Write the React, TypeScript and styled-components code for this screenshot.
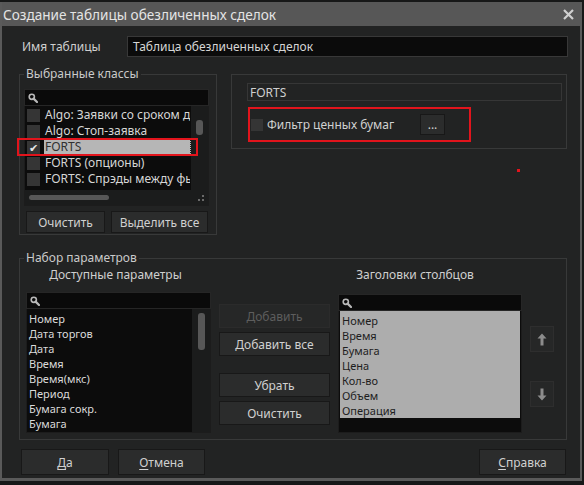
import React from "react";
import styled, { createGlobalStyle } from "styled-components";

const GlobalStyle = createGlobalStyle`
  body {
    margin: 0;
    background: #171818;
    font-family: "Noto Sans", "DejaVu Sans", sans-serif;
    font-size: 12px;
    color: #d0d0d0;
  }
`;

const Screen = styled.div`
  position: relative;
  width: 584px;
  height: 485px;
  padding-top: 2px;
  box-sizing: border-box;
  overflow: hidden;
`;

const Window = styled.div`
  width: 582px;
  height: 479px;
  box-sizing: border-box;
  border: 2px solid #5a5a5a;
  border-top: 0;
  border-bottom-width: 3px;
  background: #222323;
  display: flex;
  flex-direction: column;
`;

const TitleBar = styled.div`
  height: 24px;
  flex: none;
  background: #575757;
  display: flex;
  align-items: center;
  justify-content: space-between;
  padding: 0 6px 0 1px;
  color: #e4e4e4;
  font-size: 13.6px;
`;

const Body = styled.div`
  flex: 1;
  display: flex;
  flex-direction: column;
  padding: 10px 12px 0 17px;
`;

const NameRow = styled.div`
  display: flex;
  align-items: center;
  height: 21px;
`;

const NameLabel = styled.span`
  width: 105px;
  padding-left: 3px;
  color: #cfcfcf;
`;

const NameInput = styled.div`
  flex: 1;
  height: 21px;
  box-sizing: border-box;
  background: #0b0b0b;
  border: 1px solid #383838;
  padding-left: 5px;
  display: flex;
  align-items: center;
  color: #d6d6d6;
`;

const TopSection = styled.div`
  display: flex;
  align-items: flex-start;
  gap: 14px;
  margin-top: 10px;
`;

const GroupBox = styled.fieldset<{ $w: number; $mt?: number; $pt: number }>`
  margin: ${(p) => p.$mt ?? 0}px 0 0;
  width: ${(p) => p.$w}px;
  box-sizing: border-box;
  min-width: 0;
  padding: ${(p) => p.$pt}px 7px 1px 4px;
  border: 1px solid #383939;
`;

const GroupTitle = styled.legend`
  padding: 0 2px;
  margin: 0;
  line-height: 14px;
  color: #cacaca;
`;

const PlainGroup = styled.div`
  width: 336px;
  margin-top: 7px;
  box-sizing: border-box;
  border: 1px solid #383939;
  padding: 8px 4px 6px 15px;
`;

const SearchBox = styled.div`
  height: 17px;
  flex: none;
  box-sizing: border-box;
  background: #0a0a0a;
  border: 1px solid #262626;
  display: flex;
  align-items: center;
  padding-left: 3px;
`;

const ClassList = styled.div`
  height: 99px;
  display: grid;
  grid-template-columns: minmax(0, 1fr) 17px;
  grid-template-rows: minmax(0, 1fr) 15px;
  background: #0c0c0c;
  border: 1px solid #1c1c1c;
  border-top: 0;
`;

const Rows = styled.div`
  padding-top: 1px;
  min-width: 0;
`;

const ClassRow = styled.div`
  position: relative;
  height: 16px;
  display: flex;
  align-items: center;
  padding-left: 2px;
  white-space: nowrap;
`;

const Check = styled.span<{ $size?: number }>`
  width: ${(p) => p.$size ?? 13}px;
  height: ${(p) => p.$size ?? 13}px;
  flex: none;
  background: #353535;
  margin-right: 4px;
  display: flex;
  align-items: center;
  justify-content: center;
  color: #e8e8e8;
  font-size: 11px;
  line-height: 1;
`;

const RowText = styled.span<{ $selected?: boolean }>`
  flex: 1;
  min-width: 0;
  height: 16px;
  line-height: 16px;
  padding-left: 1px;
  overflow: hidden;
  color: ${(p) => (p.$selected ? "#303030" : "#d6d6d6")};
  background: ${(p) => (p.$selected ? "#b6b6b6" : "transparent")};
  border-right: 1px dotted ${(p) => (p.$selected ? "#1a1a1a" : "transparent")};
`;

const RedFrame = styled.span`
  position: absolute;
  z-index: 2;
  left: -8px;
  top: -1px;
  width: 181px;
  height: 18px;
  box-sizing: border-box;
  border: 2px solid #e2141c;
  pointer-events: none;
`;

const VTrack = styled.div<{ $thumbTop: number; $thumbH: number }>`
  background: #1b1c1c;
  display: flex;
  justify-content: center;
  align-items: flex-start;
  padding-top: ${(p) => p.$thumbTop}px;
  &::before {
    content: "";
    width: 7px;
    height: ${(p) => p.$thumbH}px;
    border-radius: 3px;
    background: #575757;
  }
`;

const HTrack = styled.div`
  background: #1b1c1c;
  display: flex;
  align-items: center;
  padding-left: 4px;
  &::before {
    content: "";
    width: 80px;
    height: 5px;
    border-radius: 3px;
    background: #575757;
  }
`;

const Grip = styled.div`
  background: #1b1c1c;
  display: flex;
  align-items: flex-end;
  justify-content: flex-end;
  padding: 0 3px 3px 0;
`;

const ButtonRow = styled.div<{ $mt: number; $ml?: number }>`
  display: flex;
  gap: 6px;
  margin: ${(p) => p.$mt}px 0 0 ${(p) => p.$ml ?? 0}px;
`;

const Button = styled.button<{ $w: number; $h: number }>`
  width: ${(p) => p.$w}px;
  height: ${(p) => p.$h}px;
  flex: none;
  padding: 0;
  background: #2b2c2c;
  border: 1px solid #181818;
  color: #d0d0d0;
  font: inherit;
  font-size: 12px;
  &:disabled {
    background: #262727;
    border-color: #2b2b2b;
    color: #5d5d5d;
  }
`;

const Field = styled.div`
  height: 18px;
  box-sizing: border-box;
  border: 1px solid #363636;
  padding-left: 2px;
  display: flex;
  align-items: center;
  color: #cfcfcf;
`;

const FilterRow = styled.div`
  width: 223px;
  height: 35px;
  box-sizing: border-box;
  margin: 6px 0 0 1px;
  border: 2px solid #e2141c;
  display: flex;
  align-items: center;
  padding-left: 1px;
`;

const FilterLabel = styled.span`
  flex: 1;
  color: #d0d0d0;
`;

const DotsButton = styled(Button)`
  margin-right: 24px;
  line-height: 10px;
`;

const ParamsGrid = styled.div`
  display: grid;
  grid-template-columns: 185px 111px 184px 24px;
  grid-template-rows: 16px 141px;
  column-gap: 8px;
  row-gap: 9px;
  margin-left: 2px;
  padding-bottom: 5px;
`;

const ColumnHeader = styled.div<{ $shift: number }>`
  text-align: center;
  line-height: 16px;
  padding-right: ${(p) => p.$shift}px;
  white-space: nowrap;
  color: #cfcfcf;
`;

const ListColumn = styled.div<{ $mt?: number }>`
  display: flex;
  flex-direction: column;
  margin-top: ${(p) => p.$mt ?? 0}px;
  min-height: 0;
`;

const ParamList = styled.div`
  flex: 1;
  display: grid;
  grid-template-columns: minmax(0, 1fr) 18px;
  background: #0c0c0c;
  border: 1px solid #1c1c1c;
  border-top: 0;
`;

const ParamRows = styled.div<{ $light?: boolean }>`
  padding-top: 2px;
  align-self: start;
  background: ${(p) => (p.$light ? "#adadad" : "transparent")};
`;

const ParamRow = styled.div<{ $light?: boolean }>`
  height: 15px;
  line-height: 15px;
  font-size: 11px;
  padding-left: 2px;
  white-space: nowrap;
  color: ${(p) => (p.$light ? "#1e1e1e" : "#dadada")};
`;

const HeadersList = styled.div`
  flex: 1;
  background: #0c0c0c;
  border: 1px solid #1c1c1c;
  border-top: 0;
  padding: 0 1px;
`;

const ActionColumn = styled.div`
  display: flex;
  flex-direction: column;
  gap: 4px;
  padding-top: 12px;
`;

const Spacer = styled.div<{ $h: number }>`
  height: ${(p) => p.$h}px;
  flex: none;
`;

const ArrowColumn = styled.div`
  display: flex;
  flex-direction: column;
  padding-top: 34px;
  gap: 29px;
`;

const ArrowButton = styled.button`
  width: 24px;
  height: 26px;
  padding: 0;
  background: #262727;
  border: 1px solid #2e2e2e;
  display: flex;
  align-items: center;
  justify-content: center;
`;

const Footer = styled.div`
  display: flex;
  gap: 9px;
  margin: 9px 2px 0 2px;
`;

const PushRight = styled.div`
  flex: 1;
`;

const Mnemonic = styled.span`
  text-decoration: underline;
  text-underline-offset: 2px;
`;

const RedDot = styled.div`
  position: absolute;
  left: 517px;
  top: 169px;
  width: 3px;
  height: 3px;
  background: #e2141c;
`;

const SearchIcon = () => (
  <svg width="10" height="10" viewBox="0 0 10 10">
    <circle cx="3.8" cy="3.8" r="2.6" fill="none" stroke="#b8b8b8" strokeWidth="1.6" />
    <path d="M5.6 5.6 L9 9" stroke="#b8b8b8" strokeWidth="2.2" strokeLinecap="round" />
  </svg>
);

const CloseIcon = () => (
  <svg width="11" height="11" viewBox="0 0 11 11">
    <path d="M1 1 L10 10 M10 1 L1 10" stroke="#d0d0d0" strokeWidth="2.2" />
  </svg>
);

const GripIcon = () => (
  <svg width="8" height="8" viewBox="0 0 8 8" fill="#6a6a6a">
    <rect x="5" y="1" width="2" height="2" />
    <rect x="1" y="5" width="2" height="2" />
    <rect x="5" y="5" width="2" height="2" />
  </svg>
);

const ArrowIcon = ({ down }: { down?: boolean }) => (
  <svg width="10" height="13" viewBox="0 0 10 13" style={down ? { transform: "rotate(180deg)" } : undefined}>
    <path d="M5 0.5 L9.5 5.5 L6.5 5.5 L6.5 12.5 L3.5 12.5 L3.5 5.5 L0.5 5.5 Z" fill="#8c8c8c" />
  </svg>
);

const classes = [
  { name: "Algo: Заявки со сроком действия", checked: false },
  { name: "Algo: Стоп-заявка", checked: false },
  { name: "FORTS", checked: true },
  { name: "FORTS (опционы)", checked: false },
  { name: "FORTS: Спрэды между фьючерсами", checked: false },
];

const available = ["Номер", "Дата торгов", "Дата", "Время", "Время(мкс)", "Период", "Бумага сокр.", "Бумага"];
const chosen = ["Номер", "Время", "Бумага", "Цена", "Кол-во", "Объем", "Операция"];

export default function App() {
  return (
    <Screen>
      <GlobalStyle />
      <Window>
        <TitleBar>
          <span>Создание таблицы обезличенных сделок</span>
          <CloseIcon />
        </TitleBar>
        <Body>
          <NameRow>
            <NameLabel>Имя таблицы</NameLabel>
            <NameInput>Таблица обезличенных сделок</NameInput>
          </NameRow>

          <TopSection>
            <GroupBox $w={198} $pt={8}>
              <GroupTitle>Выбранные классы</GroupTitle>
              <SearchBox>
                <SearchIcon />
              </SearchBox>
              <ClassList>
                <Rows>
                  {classes.map((c) => (
                    <ClassRow key={c.name}>
                      <Check>{c.checked ? "✔" : ""}</Check>
                      <RowText $selected={c.checked}>{c.name}</RowText>
                      {c.checked && <RedFrame />}
                    </ClassRow>
                  ))}
                </Rows>
                <VTrack $thumbTop={14} $thumbH={15} />
                <HTrack />
                <Grip>
                  <GripIcon />
                </Grip>
              </ClassList>
              <ButtonRow $mt={5} $ml={2}>
                <Button $w={79} $h={22}>Очистить</Button>
                <Button $w={97} $h={22}>Выделить все</Button>
              </ButtonRow>
            </GroupBox>

            <PlainGroup>
              <Field>FORTS</Field>
              <FilterRow>
                <Check $size={12}></Check>
                <FilterLabel>Фильтр ценных бумаг</FilterLabel>
                <DotsButton $w={25} $h={21}>...</DotsButton>
              </FilterRow>
            </PlainGroup>
          </TopSection>

          <GroupBox $w={548} $mt={16} $pt={2}>
            <GroupTitle>Набор параметров</GroupTitle>
            <ParamsGrid>
              <ColumnHeader $shift={6}>Доступные параметры</ColumnHeader>
              <div />
              <ColumnHeader $shift={30}>Заголовки столбцов</ColumnHeader>
              <div />

              <ListColumn>
                <SearchBox>
                  <SearchIcon />
                </SearchBox>
                <ParamList>
                  <ParamRows>
                    {available.map((p) => (
                      <ParamRow key={p}>{p}</ParamRow>
                    ))}
                  </ParamRows>
                  <VTrack $thumbTop={4} $thumbH={37} />
                </ParamList>
              </ListColumn>

              <ActionColumn>
                <Button $w={111} $h={24} disabled>
                  Добавить
                </Button>
                <Button $w={111} $h={24}>Добавить все</Button>
                <Spacer $h={9} />
                <Button $w={111} $h={24}>Убрать</Button>
                <Button $w={111} $h={24}>Очистить</Button>
              </ActionColumn>

              <ListColumn $mt={2}>
                <SearchBox>
                  <SearchIcon />
                </SearchBox>
                <HeadersList>
                  <ParamRows $light>
                    {chosen.map((p) => (
                      <ParamRow key={p} $light>
                        {p}
                      </ParamRow>
                    ))}
                  </ParamRows>
                </HeadersList>
              </ListColumn>

              <ArrowColumn>
                <ArrowButton>
                  <ArrowIcon />
                </ArrowButton>
                <ArrowButton>
                  <ArrowIcon down />
                </ArrowButton>
              </ArrowColumn>
            </ParamsGrid>
          </GroupBox>

          <Footer>
            <Button $w={88} $h={26}>
              <Mnemonic>Д</Mnemonic>а
            </Button>
            <Button $w={87} $h={26}>
              <Mnemonic>О</Mnemonic>тмена
            </Button>
            <PushRight />
            <Button $w={87} $h={26}>
              <Mnemonic>С</Mnemonic>правка
            </Button>
          </Footer>
        </Body>
      </Window>
      <RedDot />
    </Screen>
  );
}
